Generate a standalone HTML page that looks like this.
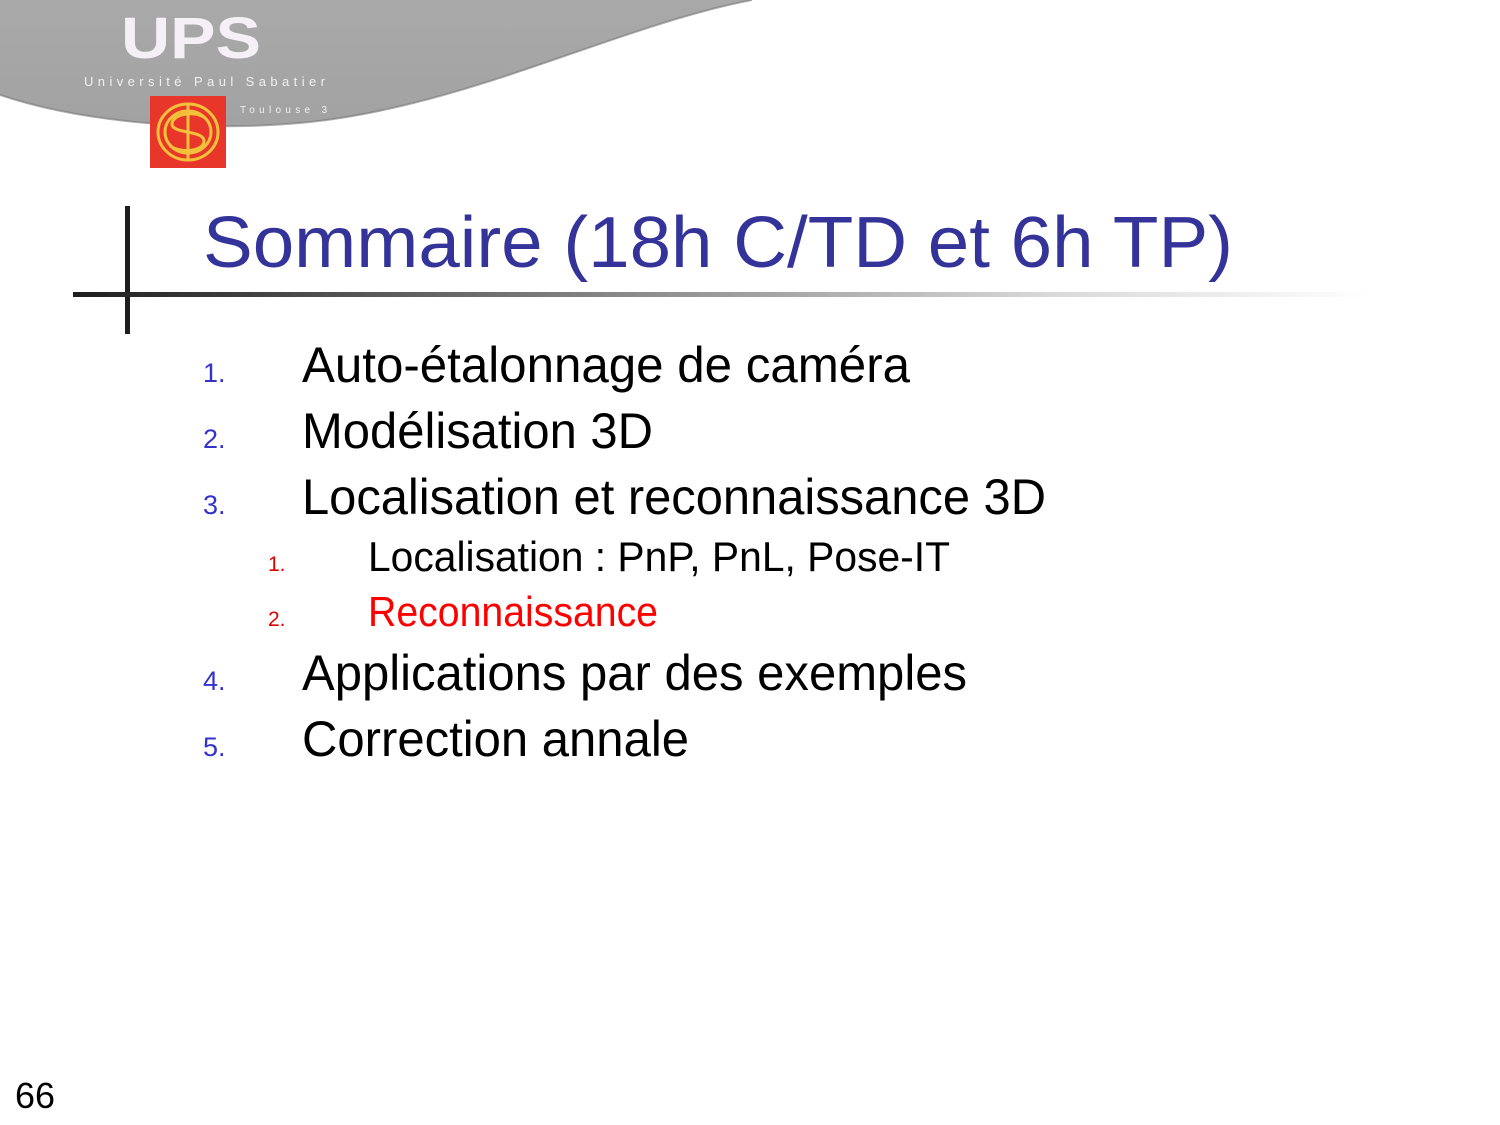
<!DOCTYPE html>
<html><head><meta charset="utf-8"><style>
html,body{margin:0;padding:0;background:#fff;}
svg{display:block}
text{font-family:"Liberation Sans","DejaVu Sans",sans-serif;}
</style></head><body>
<svg width="1500" height="1125" viewBox="0 0 1500 1125" xmlns="http://www.w3.org/2000/svg">
<defs>
<linearGradient id="hl" x1="0" x2="1" y1="0" y2="0">
<stop offset="0" stop-color="#1e1e1e"/><stop offset="0.35" stop-color="#777"/><stop offset="0.75" stop-color="#d8d8d8"/><stop offset="1" stop-color="#fff"/>
</linearGradient>
<linearGradient id="gr" x1="0" x2="0" y1="0" y2="1">
<stop offset="0" stop-color="#a9a9a9"/><stop offset="1" stop-color="#a2a2a2"/>
</linearGradient>
</defs>
<path d="M0,0 L752,0 C620,25 470,105 310,122 C200,133 80,122 0,95 Z" fill="url(#gr)"/>
<path d="M0,95 C80,122 200,133 310,122 C470,105 620,25 752,0" fill="none" stroke="#777" stroke-width="2" opacity="0.6"/>
<text x="121" y="58" font-size="58" font-weight="bold" fill="#f4f0f6" textLength="140" lengthAdjust="spacingAndGlyphs">UPS</text>
<text x="84" y="86" font-size="13" fill="#f0f0f0" textLength="241" lengthAdjust="spacing">Université Paul Sabatier</text>
<text x="240" y="113" font-size="10" fill="#f0f0f0" textLength="87" lengthAdjust="spacing">Toulouse 3</text>
<rect x="150" y="96" width="76" height="72" fill="#e8362b"/>
<g fill="none" stroke="#f3c23a" stroke-width="3">
<ellipse cx="188" cy="132" rx="30" ry="28"/>
<ellipse cx="188" cy="132" rx="23" ry="21"/>
<path d="M205,118 C195,110 172,114 172,124 C172,134 204,130 204,141 C204,151 182,154 170,146"/>
<line x1="188" y1="104" x2="188" y2="160"/>
</g>
<line x1="127.5" y1="206" x2="127.5" y2="334" stroke="#1e1e1e" stroke-width="5"/>
<rect x="73" y="292" width="1300" height="5" fill="url(#hl)"/>
<text x="203" y="267" font-size="72" fill="#333399" textLength="1030" lengthAdjust="spacingAndGlyphs">Sommaire (18h C/TD et 6h TP)</text>
<g fill="#3333cc" font-size="27">
<text x="203" y="382">1.</text><text x="203" y="448">2.</text><text x="203" y="514">3.</text><text x="203" y="690">4.</text><text x="203" y="756">5.</text>
</g>
<g fill="#000" font-size="50">
<text x="302" y="382" textLength="608" lengthAdjust="spacingAndGlyphs">Auto-étalonnage de caméra</text>
<text x="302" y="448" textLength="351" lengthAdjust="spacingAndGlyphs">Modélisation 3D</text>
<text x="302" y="514" textLength="744" lengthAdjust="spacingAndGlyphs">Localisation et reconnaissance 3D</text>
<text x="302" y="690" textLength="665" lengthAdjust="spacingAndGlyphs">Applications par des exemples</text>
<text x="302" y="756" textLength="387" lengthAdjust="spacingAndGlyphs">Correction annale</text>
</g>
<g fill="#e00000" font-size="21">
<text x="268" y="571">1.</text><text x="268" y="626">2.</text>
</g>
<text x="368" y="571" font-size="42" fill="#000" textLength="582" lengthAdjust="spacingAndGlyphs">Localisation : PnP, PnL, Pose-IT</text>
<text x="368" y="626" font-size="42" fill="#ff0000" textLength="290" lengthAdjust="spacingAndGlyphs">Reconnaissance</text>
<text x="15" y="1108" font-size="36" fill="#000" textLength="40" lengthAdjust="spacingAndGlyphs">66</text>
</svg>
</body></html>
